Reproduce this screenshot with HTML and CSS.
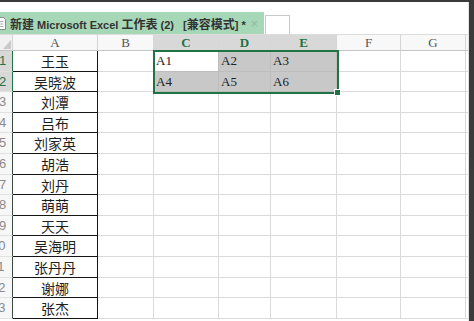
FILE: index.html
```html
<!DOCTYPE html>
<html lang="zh-CN">
<head>
    <meta charset="UTF-8">
    <title>新建 Microsoft Excel 工作表 (2)</title>
    <link rel="stylesheet" href="styles.css">
</head>
<body>
    <div class="app">
        <div class="tabs">
            <div class="tab">
                <svg class="doc" width="6" height="13" viewBox="0 0 6 13">
                    <path d="M-3 0.5 H3.5 L5.5 2.5 V12.5 H-3" fill="#fff" stroke="#8a8a8a"/>
                    <path d="M-1 4.5 H3.5 M-1 7 H3.5 M-1 9.5 H3.5" stroke="#b0b0b0"/>
                </svg>
                <span class="title"><span class="cj">新建</span> Microsoft Excel <span class="cj">工作表</span> (2)&nbsp;&nbsp; [<span class="cj">兼容模式</span>] *</span>
                <span class="close">×</span>
            </div>
            <div class="newtab"></div>
        </div>

        <div class="sheet">
            <!-- column headers -->
            <div class="h corner"><span class="tri"></span></div>
            <div class="h">A</div>
            <div class="h">B</div>
            <div class="h on">C</div>
            <div class="h on">D</div>
            <div class="h on">E</div>
            <div class="h">F</div>
            <div class="h">G</div>
            <div class="h"></div>

            <!-- row 1 -->
            <div class="rn on">1</div>
            <div class="c n">王玉</div>
            <div class="c"></div>
            <div class="c s act">A1
                <div class="selbox"><span class="handle"></span></div>
            </div>
            <div class="c s">A2</div>
            <div class="c s">A3</div>
            <div class="c"></div>
            <div class="c"></div>
            <div class="c"></div>

            <!-- row 2 -->
            <div class="rn on">2</div>
            <div class="c n">吴晓波</div>
            <div class="c"></div>
            <div class="c s">A4</div>
            <div class="c s">A5</div>
            <div class="c s">A6</div>
            <div class="c"></div>
            <div class="c"></div>
            <div class="c"></div>

            <div class="rn">3</div>
            <div class="c n">刘潭</div>
            <div class="c"></div><div class="c"></div><div class="c"></div><div class="c"></div><div class="c"></div><div class="c"></div><div class="c"></div>

            <div class="rn">4</div>
            <div class="c n">吕布</div>
            <div class="c"></div><div class="c"></div><div class="c"></div><div class="c"></div><div class="c"></div><div class="c"></div><div class="c"></div>

            <div class="rn">5</div>
            <div class="c n">刘家英</div>
            <div class="c"></div><div class="c"></div><div class="c"></div><div class="c"></div><div class="c"></div><div class="c"></div><div class="c"></div>

            <div class="rn">6</div>
            <div class="c n">胡浩</div>
            <div class="c"></div><div class="c"></div><div class="c"></div><div class="c"></div><div class="c"></div><div class="c"></div><div class="c"></div>

            <div class="rn">7</div>
            <div class="c n">刘丹</div>
            <div class="c"></div><div class="c"></div><div class="c"></div><div class="c"></div><div class="c"></div><div class="c"></div><div class="c"></div>

            <div class="rn">8</div>
            <div class="c n">萌萌</div>
            <div class="c"></div><div class="c"></div><div class="c"></div><div class="c"></div><div class="c"></div><div class="c"></div><div class="c"></div>

            <div class="rn">9</div>
            <div class="c n">天天</div>
            <div class="c"></div><div class="c"></div><div class="c"></div><div class="c"></div><div class="c"></div><div class="c"></div><div class="c"></div>

            <div class="rn two">10</div>
            <div class="c n">吴海明</div>
            <div class="c"></div><div class="c"></div><div class="c"></div><div class="c"></div><div class="c"></div><div class="c"></div><div class="c"></div>

            <div class="rn two">11</div>
            <div class="c n">张丹丹</div>
            <div class="c"></div><div class="c"></div><div class="c"></div><div class="c"></div><div class="c"></div><div class="c"></div><div class="c"></div>

            <div class="rn two">12</div>
            <div class="c n">谢娜</div>
            <div class="c"></div><div class="c"></div><div class="c"></div><div class="c"></div><div class="c"></div><div class="c"></div><div class="c"></div>

            <div class="rn two">13</div>
            <div class="c n">张杰</div>
            <div class="c"></div><div class="c"></div><div class="c"></div><div class="c"></div><div class="c"></div><div class="c"></div><div class="c"></div>
        </div>
    </div>
</body>
</html>
```

FILE: styles.css
```css
body {
    margin: 0;
    background-color: #3b3b3b;
    font-family: "Liberation Serif", serif;
    overflow: hidden;
}
.app {
    margin: 2px 5px 0 0;
    height: 319px;
    background-color: #fff;
    border-right: 1px solid #e2e2e2;
    overflow: hidden;
}

/* sheet tab strip */
.tabs {
    height: 32px;
    display: flex;
    align-items: flex-end;
}
.tab {
    width: 264px;
    height: 22px;
    background-color: #a6d7b7;
    display: flex;
    align-items: center;
    font-family: "Liberation Sans", "Noto Sans CJK SC", sans-serif;
    font-size: 11px;
    font-weight: bold;
    color: #333;
    white-space: nowrap;
    overflow: hidden;
}
.doc {
    flex: 0 0 auto;
    margin-right: 4px;
}
.title {
    flex: 1 1 auto;
}
.cj {
    font-family: "Noto Sans CJK SC", sans-serif;
    font-size: 12px;
}
.close {
    flex: 0 0 auto;
    font-weight: normal;
    font-size: 13px;
    color: #8fb9a0;
    margin-right: 6px;
}
.newtab {
    width: 23px;
    height: 18px;
    margin-left: 1px;
    border: 1px solid #c9c9c9;
    border-bottom: none;
    background-color: #fff;
}

/* grid */
.sheet {
    display: grid;
    grid-template-columns: 13px 85px 56px 65px 52px 66px 64px 65px 1fr;
    grid-template-rows: 17px repeat(13, 20.6px);
}
.h {
    background-color: #f8f8f8;
    border-right: 1px solid #d6d6d6;
    border-bottom: 1px solid #c4c4c4;
    border-top: 1px solid #dcdcdc;
    font-size: 13px;
    line-height: 15px;
    color: #555;
    text-align: center;
}
.h.on {
    background-color: #d8d8d8;
    color: #217346;
    font-weight: bold;
    border-bottom: 1px solid #217346;
}
.corner {
    position: relative;
    background-color: #f0f0f0;
}
.tri {
    position: absolute;
    right: 1px;
    bottom: 1px;
    border-left: 8px solid transparent;
    border-bottom: 9px solid #c9c9c9;
}
.rn {
    background-color: #f7f7f7;
    border-right: 1px solid #3c4a42;
    border-bottom: 1px solid #e0e0e0;
    font-family: "Liberation Sans", sans-serif;
    font-size: 13px;
    line-height: 20px;
    color: #8a8a8a;
    text-indent: -1px;
    white-space: nowrap;
    overflow: hidden;
}
.rn.two {
    text-indent: -9px;
}
.rn.on {
    background-color: #d8d8d8;
    color: #217346;
    border-right-color: #217346;
}
.c {
    border-right: 1px solid #dadada;
    border-bottom: 1px solid #dadada;
    font-size: 13px;
    line-height: 20px;
    color: #222;
    padding-left: 2px;
}
.c.n {
    border-right-color: #151515;
    border-bottom-color: #151515;
    padding-left: 0;
    text-align: center;
    font-family: "Noto Sans CJK SC", sans-serif;
    font-size: 14px;
    color: #1e1e1e;
}
.c.s {
    background-color: #c8c8c8;
    border-color: #bdbdbd;
}
.c.act {
    background-color: #fff;
    position: relative;
}
.selbox {
    position: absolute;
    left: -1px;
    top: -1px;
    width: 186px;
    height: 44px;
    box-sizing: border-box;
    border: 2px solid #217346;
}
.handle {
    position: absolute;
    right: -4px;
    bottom: -4px;
    width: 5px;
    height: 5px;
    background-color: #217346;
    border: 1px solid #fff;
}
```
